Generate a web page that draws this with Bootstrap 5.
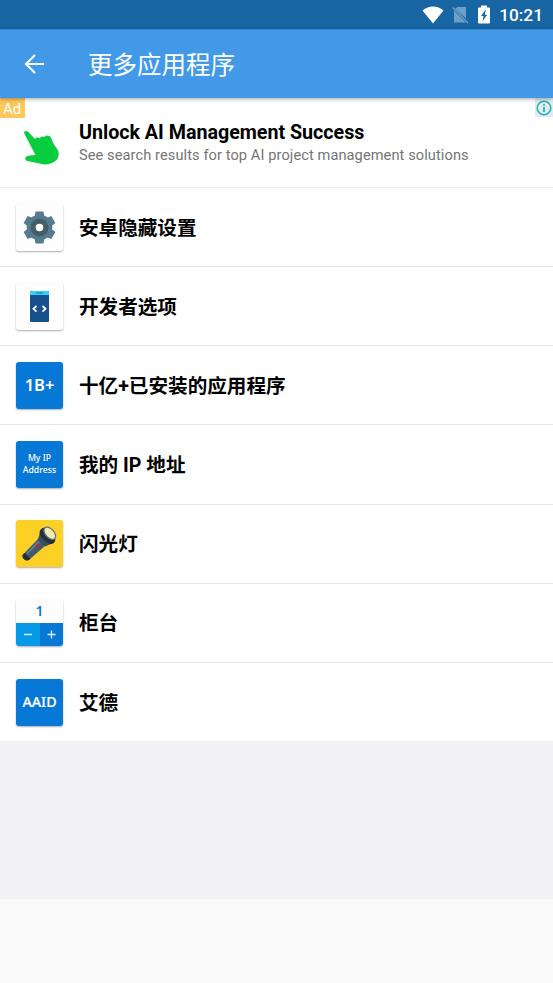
<!DOCTYPE html>
<html lang="zh-CN">
<head>
<meta charset="utf-8">
<meta name="viewport" content="width=device-width, initial-scale=1">
<title>更多应用程序</title>
<link href="https://cdn.jsdelivr.net/npm/bootstrap@5.3.0/dist/css/bootstrap.min.css" rel="stylesheet">
<style>
body{font-family:Roboto,"Noto Sans CJK SC",sans-serif;background:#fafafa;color:#000;overflow:hidden}
.status-bar{height:29px;background:#1765a3;padding-right:10px;font-size:17.3px;font-weight:500;line-height:29px}
.clock{padding-top:2px}
.app-bar{height:69px;background:#4199e8;border-top:1px solid #3183ce;box-shadow:0 1px 4px rgba(0,0,0,.35);z-index:2;padding-left:22px}
.app-title{font-size:24.5px;line-height:36px;margin-left:41px;padding-top:4px;font-weight:400}
.page-area{height:800.5px;background:#f1f1f6}
.ad-row{height:90px;border-bottom:1px solid #ededed;padding-left:16px}
.ad-tag{left:0;top:0;width:25px;height:20px;background:#fdc75c;color:#fff;font-size:15px;line-height:23px;padding-left:3px}
.ad-info{right:0;top:0;width:18px;height:19px;background:#e9e9e9}
.ad-copy{padding-top:23px}
.ad-title{font-size:19.7px;line-height:24px;font-weight:700;letter-spacing:-.02px}
.ad-text{font-size:14.6px;line-height:20px;color:#757575;letter-spacing:.09px}
.app-list{--bs-list-group-border-radius:0}
.app-item{height:79.15px;border:0;border-bottom:1px solid #e8e8e8;padding:0 0 0 16px;color:#000;font-size:19.6px;font-weight:700;line-height:28px}
.app-item:last-child{border-bottom:0;height:78.4px}
.app-name{padding-top:3px}
.tile{width:47px;height:47px;border-radius:3px;box-shadow:0 1px 2px rgba(0,0,0,.32);background:#fdfdfd;margin-right:16px;overflow:hidden;flex:none}
.tile-blue{background:#0778d6;color:#fff}
.tile-yellow{background:#fdd026}
.noto{font-family:"Noto Sans",sans-serif;font-weight:500}
.fs-big{font-size:16.5px;font-weight:600}
.fs-aaid{font-size:14.3px;font-weight:500;-webkit-text-stroke:.2px #fff}
.fs-tiny{font-size:8.7px;line-height:12px}
.count-top{height:24px;font-size:14px;line-height:24px;color:#0778d6;font-weight:600}
.count-key{height:23px}
.key-minus{background:#079ae6}
.key-plus{background:#0778d6}
</style>
</head>
<body>
<header class="status-bar d-flex justify-content-end align-items-center text-white">
  <svg width="22" height="18" viewBox="0 0 22 18"><path d="M.5 4.500C6.500-.8 15.500-.8 21.500 4.500L11 17.500Z" fill="#fff"/></svg>
  <svg class="ms-2" width="17" height="18" viewBox="0 0 17 18"><path d="M5.500 1H14V12.500L3 2.700ZM2 4.500 14 16.500H2Z" fill="#6d9fc6"/><path d="M.8 1.500 16 17" stroke="#6d9fc6" stroke-width="1.300"/></svg>
  <svg class="ms-2" width="14" height="19" viewBox="0 0 14 19"><path d="M4 .5H10V2.500H12Q13 2.500 13 3.500V17.500Q13 18.500 12 18.500H2Q1 18.500 1 17.500V3.500Q1 2.500 2 2.500H4Z" fill="#fff"/><path d="M8.300 5 4 11H6.500L5.700 16 10.200 9.800H7.700L8.800 5Z" fill="#1765a3"/></svg>
  <span class="clock ms-2">10:21</span>
</header>
<nav class="app-bar d-flex align-items-center position-relative text-white">
  <svg width="25" height="24" viewBox="0 0 25 24" fill="none" stroke="#fff" stroke-width="2.200"><path d="M22 12H4M13 3 4 12 13 21"/></svg>
  <h1 class="app-title mb-0">更多应用程序</h1>
</nav>
<main class="page-area">
  <section class="ad-row bg-white d-flex position-relative">
    <span class="ad-tag position-absolute">Ad</span>
    <svg class="flex-shrink-0 mt-4" width="63" height="48" viewBox="16.500 122.500 63 48"><path d="M24.300 133Q25.500 130.600 28.500 132L35.500 139.500Q37.500 136.700 40 138.700 42 136 45 137.300 48 135 51 137.200L54.500 145 58 150Q60.800 154.500 57.500 160 52.500 165 45 165L27.500 161.500Q24.500 159.700 26.500 157.200 29 155.500 36 155.500Z" fill="#08ce3d"/></svg>
    <div class="ad-copy">
      <div class="ad-title">Unlock AI Management Success</div>
      <div class="ad-text">See search results for top AI project management solutions</div>
    </div>
    <span class="ad-info position-absolute d-flex align-items-center justify-content-center"><svg width="16" height="16" viewBox="0 0 16 16" fill="none" stroke="#13b5cf" stroke-width="1.500"><circle cx="8" cy="8" r="6.800"/><path d="M8 7V12M8 4V5.700" stroke-width="1.800"/></svg></span>
  </section>
  <div class="app-list list-group list-group-flush">
    <div class="app-item list-group-item d-flex align-items-center">
      <div class="tile"><svg class="d-block" width="47" height="47" viewBox="-23.500 -23.500 47 47"><g fill="#557b8e"><circle r="12.800"/><g id="tooth"><path d="M-4-16H4L5-10V10L4 16H-4L-5 10V-10Z"/></g><use href="#tooth" transform="rotate(60)"/><use href="#tooth" transform="rotate(120)"/></g><circle r="9" fill="#455d68"/><circle r="3.800" fill="#fff"/></svg></div>
      <span class="app-name">安卓隐藏设置</span>
    </div>
    <div class="app-item list-group-item d-flex align-items-center">
      <div class="tile"><svg class="d-block" width="47" height="47" viewBox="0 0 47 47"><rect x="14" y="8" width="19" height="31" rx="1" fill="#17508c"/><path d="M14 12V9Q14 8 15 8H32Q33 8 33 9V12Z" fill="#36d2f5"/><path d="M20 10H27" stroke="#17799e"/><path d="M20.500 23 17.500 25.800 20.500 28.600M26.500 23 29.500 25.800 26.500 28.600" fill="none" stroke="#fff" stroke-width="1.800"/></svg></div>
      <span class="app-name">开发者选项</span>
    </div>
    <div class="app-item list-group-item d-flex align-items-center">
      <div class="tile tile-blue noto fs-big d-flex align-items-center justify-content-center">1B+</div>
      <span class="app-name">十亿+已安装的应用程序</span>
    </div>
    <div class="app-item list-group-item d-flex align-items-center">
      <div class="tile tile-blue noto fs-tiny d-flex align-items-center justify-content-center text-center">My IP<br>Address</div>
      <span class="app-name">我的 IP 地址</span>
    </div>
    <div class="app-item list-group-item d-flex align-items-center">
      <div class="tile tile-yellow"><svg class="d-block" width="47" height="47" viewBox="0 0 47 47"><path d="M7 34.500 22 19 29.500 25.500 14 39Q11 41.500 8.500 39.500 5.500 37 7 34.500Z" fill="#46596c"/><path d="M7 34.500 8.500 33 14.500 38.600 13.500 39.500Q11 41.500 8.500 39.500 5.500 37 7 34.500Z" fill="#252f3a"/><path d="M11 33.500 24 20.500" stroke="#647c90" stroke-width="1.800"/><path d="M21.500 20 24.500 12 36 23.500 29 26.500Z" fill="#3a4e62"/><path d="M23.500 14Q23 8.500 28.500 7.500L39.500 19Q39 24.500 34 24 26.500 20.500 23.500 14Z" fill="#252f3a"/><ellipse cx="33.800" cy="13.300" rx="4.300" ry="7.300" transform="rotate(-43 33.800 13.300)" fill="#f4ecaa" stroke="#5e7485" stroke-width="1.300"/><path d="M20.500 27 23.500 24" stroke="#94383f" stroke-width="3"/></svg></div>
      <span class="app-name">闪光灯</span>
    </div>
    <div class="app-item list-group-item d-flex align-items-center">
      <div class="tile"><div class="count-top noto text-center">1</div><div class="d-flex"><div class="count-key key-minus w-50"><svg class="d-block" width="23" height="23" viewBox="0 0 23 23"><path d="M8 11.500H16" stroke="#d8f0fc" stroke-width="1.300"/></svg></div><div class="count-key key-plus w-50"><svg class="d-block" width="23" height="23" viewBox="0 0 23 23"><path d="M7.500 11.500H15.500M11.500 7.500V15.500" stroke="#e0effc" stroke-width="1.300"/></svg></div></div></div>
      <span class="app-name">柜台</span>
    </div>
    <div class="app-item list-group-item d-flex align-items-center">
      <div class="tile tile-blue noto fs-aaid d-flex align-items-center justify-content-center">AAID</div>
      <span class="app-name">艾德</span>
    </div>
  </div>
</main>
<script src="https://cdn.jsdelivr.net/npm/bootstrap@5.3.0/dist/js/bootstrap.bundle.min.js"></script>
</body>
</html>
